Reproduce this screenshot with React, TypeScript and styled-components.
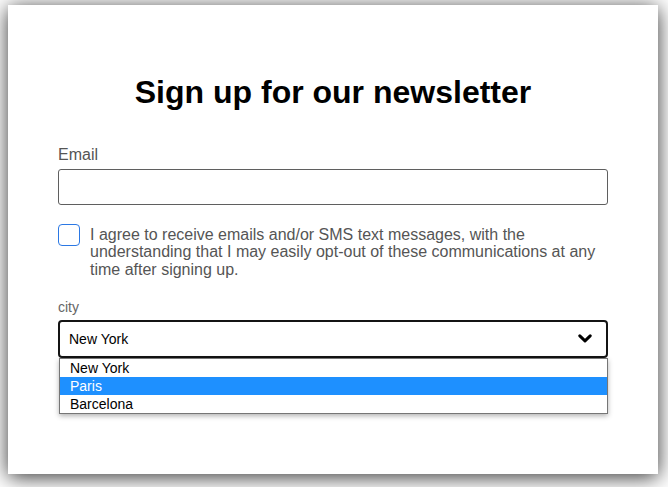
import React from "react";
import styled, { createGlobalStyle } from "styled-components";

const GlobalStyle = createGlobalStyle`
  html, body {
    margin: 0;
    padding: 0;
    background: #ffffff;
  }
  body {
    font-family: "Liberation Sans", Arial, sans-serif;
  }
  *, *::before, *::after {
    box-sizing: border-box;
  }
`;

const Page = styled.div`
  padding: 5px 0 0 8px;
  min-height: 487px;
`;

const Card = styled.form`
  width: 650px;
  height: 469px;
  background: #ffffff;
  box-shadow: 0 3px 20px rgba(0, 0, 0, 0.8);
  padding: 69px 50px 0;
  display: flex;
  flex-direction: column;
`;

const Title = styled.h1`
  margin: 0 0 35px;
  font-size: 32px;
  line-height: 37px;
  font-weight: 700;
  color: #000000;
  text-align: center;
`;

const Field = styled.div`
  display: flex;
  flex-direction: column;
  gap: 5px;
`;

const Label = styled.label<{ $small?: boolean }>`
  font-size: ${(p) => (p.$small ? "14px" : "16px")};
  line-height: ${(p) => (p.$small ? "16px" : "18px")};
  color: ${(p) => (p.$small ? "#666666" : "#555555")};
`;

const TextInput = styled.input`
  height: 36px;
  width: 100%;
  border: 1px solid #5f5f5f;
  border-radius: 3px;
  padding: 0 10px;
  font: inherit;
  font-size: 16px;
  outline: none;
`;

const ConsentRow = styled.div`
  display: flex;
  align-items: flex-start;
  gap: 10px;
  margin: 19px 0 20.5px;
`;

const CheckBox = styled.span`
  flex: 0 0 22px;
  width: 22px;
  height: 22px;
  border: 1.5px solid #2b78e4;
  border-radius: 4px;
  background: #ffffff;
`;

const ConsentText = styled.span`
  margin-top: 1.5px;
  font-size: 16px;
  line-height: 17.5px;
  color: #555555;
`;

const SelectWrap = styled.div`
  position: relative;
`;

const SelectBox = styled.div`
  height: 38px;
  border: 2px solid #141414;
  border-radius: 4px;
  display: flex;
  align-items: center;
  justify-content: space-between;
  padding: 0 14px 0 9px;
  font-size: 14px;
  color: #000000;
`;

const OptionList = styled.ul`
  position: absolute;
  top: 100%;
  left: 1px;
  right: 0;
  margin: 0;
  padding: 0;
  list-style: none;
  background: #ffffff;
  border: 1px solid #767676;
  box-shadow: 0 2px 5px rgba(0, 0, 0, 0.3);
`;

const OptionItem = styled.li<{ $active?: boolean }>`
  height: 18px;
  line-height: 18px;
  padding: 0 10px;
  font-size: 14px;
  color: ${(p) => (p.$active ? "#ffffff" : "#000000")};
  background: ${(p) => (p.$active ? "#1e90ff" : "transparent")};
`;

const Chevron = () => (
  <svg width="14" height="9" viewBox="0 0 14 9" aria-hidden="true">
    <polyline
      points="1.8,1.8 7,6.8 12.2,1.8"
      fill="none"
      stroke="#000"
      strokeWidth="3"
      strokeLinecap="round"
      strokeLinejoin="round"
    />
  </svg>
);

const cities = ["New York", "Paris", "Barcelona"];

export default function App() {
  return (
    <>
      <GlobalStyle />
      <Page>
        <Card onSubmit={(e) => e.preventDefault()}>
          <Title>Sign up for our newsletter</Title>
          <Field>
            <Label htmlFor="email">Email</Label>
            <TextInput id="email" type="email" />
          </Field>
          <ConsentRow>
            <CheckBox role="checkbox" aria-checked="false" />
            <ConsentText>
              I agree to receive emails and/or SMS text messages, with the
              understanding that I may easily opt-out of these communications
              at any time after signing up.
            </ConsentText>
          </ConsentRow>
          <Field>
            <Label $small>city</Label>
            <SelectWrap>
              <SelectBox role="combobox" aria-expanded="true">
                <span>New York</span>
                <Chevron />
              </SelectBox>
              <OptionList role="listbox">
                {cities.map((c) => (
                  <OptionItem key={c} $active={c === "Paris"}>
                    {c}
                  </OptionItem>
                ))}
              </OptionList>
            </SelectWrap>
          </Field>
        </Card>
      </Page>
    </>
  );
}
